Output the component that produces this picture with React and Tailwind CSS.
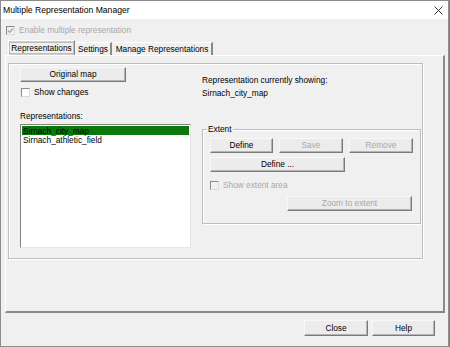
import React from "react";

const F = { fontFamily: '"Liberation Sans", Arial, sans-serif' };

function Btn({ children, w, disabled, className = "" }) {
  return (
    <div
      className={`flex items-center justify-center h-[15px] bg-[#ececec] border border-t-[#f8f8f8] border-l-[#f8f8f8] border-r-[#7a7a7a] border-b-[#7a7a7a] shadow-[inset_-1px_-1px_0_#b4b4b4] text-[8.3px] leading-none ${disabled ? "text-[#a8a8a8]" : "text-black"} ${w} ${className}`}
    >
      {children}
    </div>
  );
}

function Check({ checked, disabled }) {
  return (
    <div
      className={`w-[9px] h-[9px] flex items-center justify-center border border-t-[#8a8a8a] border-l-[#8a8a8a] border-r-[#dcdcdc] border-b-[#dcdcdc] ${disabled ? "bg-[#f0f0f0]" : "bg-white"}`}
    >
      {checked && (
        <svg width="7" height="7" viewBox="0 0 7 7">
          <path d="M1 3.5 L2.8 5.3 L6 1.5" stroke="#a0a0a0" strokeWidth="1.2" fill="none" />
        </svg>
      )}
    </div>
  );
}

export default function App() {
  return (
    <div className="w-[450px] h-[347px] bg-[#7d8a6a] overflow-hidden" style={F}>
      <div className="w-[449px] h-[347px] border border-[#8c8c8c] bg-[#f0f0f0] flex flex-col">
        {/* Title bar */}
        <div className="h-[18px] bg-white flex items-center justify-between pl-[2px] pr-[5px] shrink-0">
          <span className="text-[8.6px] text-black leading-none">Multiple Representation Manager</span>
          <svg width="9" height="9" viewBox="0 0 9 9">
            <path d="M0.5 0.5 L8.5 8.5 M8.5 0.5 L0.5 8.5" stroke="#222" strokeWidth="0.9" />
          </svg>
        </div>

        {/* Enable checkbox */}
        <div className="flex items-center gap-[4px] ml-[5px] mt-[6px] h-[10px]">
          <Check checked disabled />
          <span className="text-[8.3px] text-[#a8a8a8] leading-none">Enable multiple representation</span>
        </div>

        {/* Tabs */}
        <div className="flex items-end ml-[7px] mt-[5px] h-[15px]">
          <div className="h-[15px] w-[67px] flex items-center justify-center border border-t-white border-l-white border-r-[#8a8a8a] border-b-0 bg-[#f0f0f0] shadow-[inset_0_0_0_1px_#cfcfcf] text-[8.3px] leading-none text-black relative z-10">
            <span className="border border-[#bcbcbc] px-[1px] py-[1px]">Representations</span>
          </div>
          <div className="h-[13px] w-[36px] ml-[1px] flex items-center justify-center border-t border-t-white border-r-2 border-r-[#8a8a8a] text-[8.3px] leading-none text-black">
            Settings
          </div>
          <div className="h-[13px] w-[100px] ml-[1px] flex items-center justify-center border-t border-t-white border-r-2 border-r-[#8a8a8a] text-[8.3px] leading-none text-black">
            Manage Representations
          </div>
        </div>

        {/* Tab panel */}
        <div className="ml-[4px] w-[440px] h-[258px] border border-t-white border-l-white border-r-2 border-b-2 border-r-[#8a8a8a] border-b-[#8a8a8a] shrink-0">
          <div className="ml-[2px] mt-[7px] w-[415px] h-[196px] border border-[#bdbdbd] shadow-[inset_1px_1px_0_#ffffff,1px_1px_0_#ffffff] flex pl-[11px]">
            {/* Left column */}
            <div className="flex flex-col w-[171px]">
              <Btn w="w-[106px]" className="mt-[3px]">Original map</Btn>
              <div className="flex items-center gap-[4px] mt-[6px] ml-[1px] h-[9px]">
                <Check />
                <span className="text-[8.3px] leading-none text-black">Show changes</span>
              </div>
              <div className="text-[8.3px] leading-none text-black mt-[15px]">Representations:</div>
              <div className="mt-[4px] w-[171px] h-[124px] bg-white border border-t-[#828282] border-l-[#828282] border-r-[#e6e6e6] border-b-[#e6e6e6] p-[1px] text-[8.3px] leading-none">
                <div className="h-[9px] bg-[#0b780b] text-black flex items-center pl-[1px]">Sirnach_city_map</div>
                <div className="h-[9px] text-black flex items-center pl-[1px]">Sirnach_athletic_field</div>
              </div>
            </div>

            {/* Right column */}
            <div className="flex flex-col ml-[11px]">
              <div className="text-[8.3px] leading-none text-black mt-[12px]">Representation currently showing:</div>
              <div className="text-[8.3px] leading-none text-black mt-[5px]">Sirnach_city_map</div>
              <div className="mt-[31px] w-[219px] h-[95px] border border-[#bdbdbd] shadow-[inset_1px_1px_0_#ffffff,1px_1px_0_#ffffff] flex flex-col pl-[7px] relative">
                <span className="absolute left-[4px] top-[-5px] bg-[#f0f0f0] px-[1px] text-[8.3px] leading-none text-black">Extent</span>
                <div className="flex gap-[6px] mt-[8px]">
                  <Btn w="w-[63px]">Define</Btn>
                  <Btn w="w-[64px]" disabled>Save</Btn>
                  <Btn w="w-[64px]" disabled>Remove</Btn>
                </div>
                <Btn w="w-[135px]" className="mt-[4px]">Define ...</Btn>
                <div className="flex items-center gap-[4px] mt-[9px] h-[9px]">
                  <Check disabled />
                  <span className="text-[8.3px] leading-none text-[#a8a8a8]">Show extent area</span>
                </div>
                <Btn w="w-[125px]" disabled className="ml-[77px] mt-[6px]">Zoom to extent</Btn>
              </div>
            </div>
          </div>
        </div>

        {/* Bottom buttons */}
        <div className="flex justify-end gap-[4px] mr-[13px] mt-[7px]">
          <Btn w="w-[64px]" className="h-[16px] border-[#3c3c3c] border-t-[#3c3c3c] border-l-[#3c3c3c]">Close</Btn>
          <Btn w="w-[63px]" className="h-[16px]">Help</Btn>
        </div>
      </div>
    </div>
  );
}
